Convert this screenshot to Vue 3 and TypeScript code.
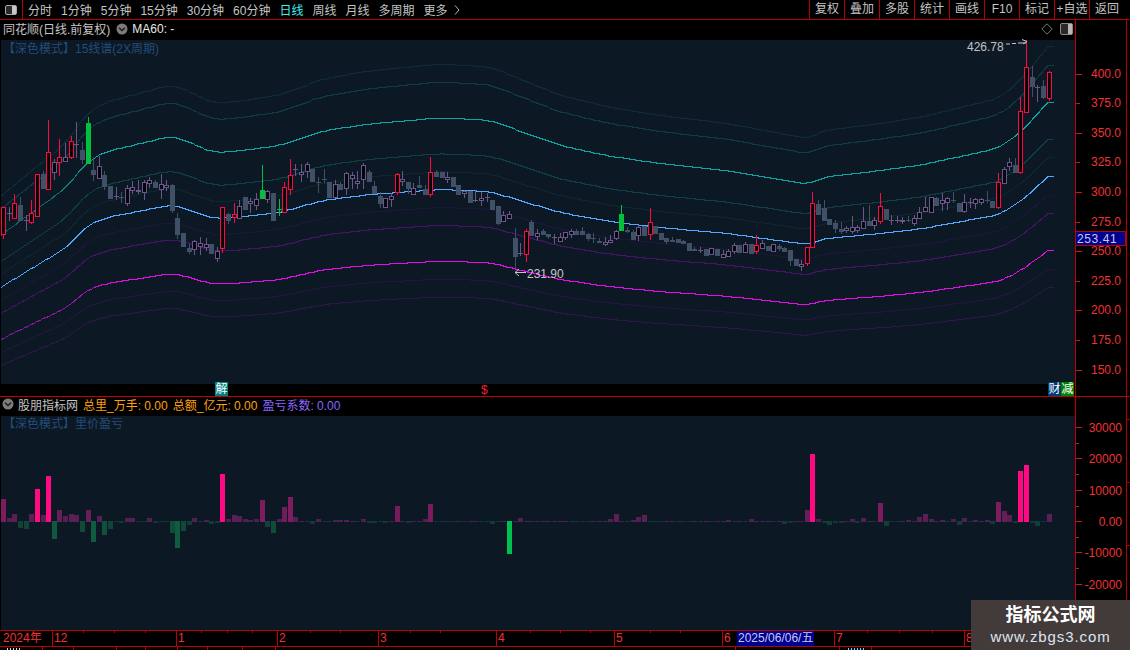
<script setup lang="ts">
type Candle = [string, number, number, number?, number?];

const tabs = ['分时', '1分钟', '5分钟', '15分钟', '30分钟', '60分钟', '日线', '周线', '月线', '多周期', '更多'];
const tools = ['复权', '叠加', '多股', '统计', '画线', 'F10', '标记', '+自选', '返回'];

const raw: Candle[] = [
  ['r',207,234,207,238],['p',213,213,207,220],['r',203,218,194,218],['g',205,220,197,220],['p',220,220,215,230],['r',213,222,200,223],['r',174,216],['g',174,188,171,188],['r',152,189,120,189],['p',162,172,159,179],
  ['r',157,162,139,175],['p',157,161,143,161],['r',141,157,136,158],['p',144,144,122,157],['g',150,159,142,163],['n',123,163,117,163],['g',170,174,157,180],['p',166,178,156,178],['g',175,186,171,189],['g',186,198],
  ['p',196,196,187,199],['g',197,197,192,202],['p',188,203,185,205],['p',187,190,181,193],['p',190,191,180,193],['p',182,192,180,199],['p',180,183,177,187],['g',182,187,180,187],['p',184,189,174,198],['p',185,187,180,190],
  ['g',185,210,184,212],['g',218,234,213,238],['g',233,246],['g',248,251,244,253],['p',241,249,240,254],['p',243,246,237,254],['p',244,247,238,250],['g',244,253],['p',251,258,247,261],['r',207,248,207,252],
  ['g',214,220,213,223],['r',214,217,203,222],['p',206,218,200,218],['g',197,209],['p',201,203,198,212],['p',199,205,193,209],['n',190,198,165,198],['p',191,199,190,202],['g',193,220],['n',209,209,199,215],
  ['r',187,212,182,212],['r',175,189,159,194],['p',169,169,164,175],['p',172,174,164,181],['p',164,171,162,177],['g',169,181],['g',182,182,177,192],['g',179,179,169,182],['g',182,197],['p',184,197,180,197],
  ['g',184,189,182,189],['p',173,188,172,194],['p',175,178,172,188],['p',181,183,171,188],['p',165,179,163,188],['g',172,181,170,181],['g',186,193,181,193],['g',196,203,192,207],['p',198,207],['p',196,199,193,206],
  ['r',174,192,173,194],['p',179,181,171,185],['g',182,188,182,193],['p',188,194,183,194],['g',185,187,176,187],['g',189,194,185,194],['r',172,194,157,196],['g',172,176,170,176],['g',172,177],['p',177,179,172,182],
  ['g',177,186],['g',185,194],['p',191,193,190,197],['g',191,202],['p',200,200,190,201],['p',198,200,192,205],['p',197,197,193,201],['g',200,209],['g',206,223,206,224],['p',215,221,211,221],
  ['p',214,218,211,218],['g',238,256,228,268],['p',253,253,243,255],['r',231,254,229,261],['g',222,235,220,235],['p',233,236,229,239],['g',231,234,229,234],['g',234,236,234,238],['p',237,237,234,243],['p',237,241,233,241],
  ['p',232,237,232,239],['p',231,234,229,237],['g',231,234,229,234],['g',231,234,227,234],['g',234,238,233,240],['g',238,238,233,242],['g',241,242,238,242],['p',242,244,237,245],['p',240,242,235,242],['p',231,238,230,239],
  ['n',214,230,205,230],['g',230,231,227,232],['g',232,239,230,239],['p',227,235,225,240],['g',226,235],['r',222,234,208,239],['g',226,233],['g',233,239],['g',238,241,238,243],['g',240,241,237,241],
  ['g',239,242],['g',241,243,240,243],['g',243,250],['g',249,250,247,250],['p',250,250,247,252],['g',249,255],['p',248,254],['g',249,255],['p',254,257,250,257],['p',251,256,249,256],
  ['p',245,251,243,253],['g',245,252],['p',244,252,242,252],['g',244,253],['r',245,251,235,253],['p',243,248,240,248],['g',246,250],['p',244,251],['g',246,248,244,250],['g',248,251,247,251],
  ['g',250,260,250,265],['g',259,265],['p',264,266,260,270],['r',247,263,247,265],['r',203,247,192,247],['g',204,214,200,214],['g',208,220,200,220],['g',219,224],['g',223,228,220,232],['g',229,231,222,233],
  ['p',228,230,226,232],['p',227,231,216,233],['p',227,230,225,232],['p',221,228,207,228],['g',221,225,205,225],['p',220,225,217,229],['r',206,221,193,223],['g',209,219],['p',220,220,215,224],['p',220,220,216,222],
  ['p',220,221,217,223],['g',220,220,216,221],['p',218,223,215,225],['p',212,218,207,218],['p',207,211,197,211],['p',197,212,197,212],['g',198,205,197,205],['p',200,203,193,210],['p',198,202,197,209],['g',200,200,192,202],
  ['g',203,211],['p',202,211,194,212],['p',202,202,198,207],['p',199,203,198,208],['p',199,202,198,204],['g',200,200,191,202],['g',201,207],['r',182,207,173,208],['p',169,183,167,183],['p',162,166,158,170],
  ['g',165,172,158,172],['r',111,172,97,173],['r',67,112,40,112],['g',77,86,66,96],['p',87,87,85,101],['g',86,97,80,98],['r',72,98,71,100]
];

const vols: number[] = [
  23,4,8,-7,-8,8,33,7,46,-18,12,6,8,7,-11,12,-21,6,-14,-8,-1,-2,4,4,-1,-1,4,-2,-1,-1,-12,-27,-10,-4,4,-1,2,-3,-2,48,
  3,7,6,3,2,3,22,-6,-12,3,15,25,5,1,-1,-3,3,-1,-1,2,2,2,1,-1,3,-2,-2,-1,-2,1,16,1,-2,1,1,3,18,-1,-1,-1,
  -1,1,-1,1,1,-1,-1,-3,-1,1,-33,1,4,1,1,1,1,1,1,1,1,-1,-1,-1,-1,1,1,1,3,8,1,-1,2,5,7,-1,-1,-1,1,1,
  -1,-1,-1,1,-1,1,-1,1,1,2,-1,1,-1,3,1,1,1,-1,1,-3,-2,1,1,12,68,3,-2,-4,-2,-2,1,3,-2,4,1,-1,19,-5,-1,-1,
  1,2,1,5,8,3,1,2,-1,3,-4,4,-1,2,1,2,-3,20,11,7,-2,51,57,-2,-5,-1,8
];

const centers = (i: number) => Math.round(3.2 + 5.62 * i);

const candleColor: Record<string, string> = { r: '#ff0a40', p: '#6a5688', g: '#3f5067', n: '#00c03c' };

const candles = raw.map(([t, top, bot, wt, wb], i) => {
  const x = centers(i);
  const color = candleColor[t];
  const hollow = t === 'r' || t === 'p';
  return {
    key: i,
    wick: `M${x + 0.5} ${wt ?? top}V${(wb ?? bot) + 1}`,
    cross: top === bot,
    hollow,
    color,
    x: x - 2,
    y: top,
    h: Math.max(bot - top, 1)
  };
});

const mix = (a: number[], b: number[], r: number) =>
  `rgb(${a.map((v, k) => Math.round(v + (b[k] - v) * r)).join(',')})`;

const bars = vols.map((v, i) => {
  const m = Math.abs(v);
  const r = Math.min(1, m / 20);
  const fill = v >= 30
    ? '#ff0a82'
    : v <= -30
      ? '#00c050'
      : v > 0
        ? mix([70, 32, 78], [126, 28, 96], r)
        : mix([18, 52, 52], [16, 92, 64], r);
  return { key: i, x: centers(i) - 2, y: v > 0 ? 522 - m : 521, w: 5, h: m, fill };
});

const keyPts: [number, number][] = [
  [1,287],[12,280],[40,263],[67,247],[87,225],[107,217],[143,210],[167,205],[177,205],[213,218],[233,217],[253,215],[280,212],[323,200],[370,194],[440,189],[490,191],[513,198],[560,212],[610,221],[660,227],[727,233],[800,243],[806,244],[827,238],[880,233],[923,228],[1000,214],[1022,200],[1048,176],[1055,176]
];

const yAt = (x: number) => {
  for (let i = 1; i < keyPts.length; i++) {
    if (x <= keyPts[i][0]) {
      const [x0, y0] = keyPts[i - 1];
      const [x1, y1] = keyPts[i];
      return y0 + ((y1 - y0) * (x - x0)) / (x1 - x0);
    }
  }
  return 176;
};

// Light moving average so the bands bend softly, except near the sharp right end.
const smoothY = (x: number) => {
  if (x < 20 || x > 1030) return yAt(x);
  const r = x > 780 && x < 830 ? 4 : 10;
  let sum = 0;
  for (let d = -r; d <= r; d += 2) sum += yAt(x + d);
  return sum / (r + 1);
};

const toPrice = (y: number) => 300 + (192 - y) / 1.184;
const toY = (p: number) => 192 - (p - 300) * 1.184;

const bandDefs: [number, string][] = [
  [1.35, '#0f2c36'], [1.3, '#0f3c42'], [1.2, 'url(#tealFade)'], [1.1, '#0f4044'], [1.05, '#0f262f'],
  [0.95, '#1e1638'], [0.9, '#4a1266'], [0.8, 'url(#magentaFade)'], [0.75, '#22163f'], [0.7, '#2f1648'], [1, '#55a8ff']
];

const bands = bandDefs.map(([k, color]) => {
  const pts: string[] = [];
  for (let x = 1; x <= 1055; x += 3) {
    const y = toY(toPrice(smoothY(x)) * k);
    pts.push(`${x},${Math.round(y) + 0.5}`);
  }
  return { k, color, pts: pts.join(' ') };
});

const mainTicks = [400, 375, 350, 325, 300, 275, 250, 225, 200, 175, 150].map((v) => ({
  v,
  y: Math.round(toY(v)),
  long: v % 50 === 0
}));

const subTicks = [
  { t: '30000', y: 427 }, { t: '20000', y: 458 }, { t: '10000', y: 490 },
  { t: '0.00', y: 521 }, { t: '-10000', y: 552 }, { t: '-20000', y: 584 }
];
const subMinor = [443, 474, 506, 537, 568, 600, 615];
const edgeTicks = [419, 482, 545, 608];

const months = [
  { t: '2024年', x: 3, sep: 0 }, { t: '12', x: 54, sep: 52 }, { t: '1', x: 178, sep: 176 }, { t: '2', x: 279, sep: 277 },
  { t: '3', x: 380, sep: 378 }, { t: '4', x: 498, sep: 496 }, { t: '5', x: 616, sep: 614 }, { t: '6', x: 724, sep: 722 },
  { t: '7', x: 836, sep: 834 }, { t: '8', x: 966, sep: 964 }
];
const timeTicks = [83, 114, 145, 201, 227, 252, 310, 340, 410, 440, 530, 560, 590, 650, 680, 867, 899, 932];
const lowSeps = [42, 73, 116, 145, 177, 207, 242, 275, 735, 839, 871];
</script>

<template>
  <div class="app">
    <header class="toolbar">
      <div class="layout-btn">
        <svg width="14" height="12" viewBox="0 0 14 12">
          <rect x="1.5" y="1.5" width="11" height="9" rx="1.5" fill="#2a2a2a" stroke="#a8a8a8" />
          <rect x="8" y="2" width="4" height="8" fill="#c8c8c8" />
        </svg>
      </div>
      <nav class="tabs">
        <span v-for="t in tabs" :key="t" class="tab" :class="{ active: t === '日线' }">{{ t }}</span>
        <svg class="more" width="6" height="12" viewBox="0 0 6 12"><path d="M1 1.5 5 6 1 10.5" fill="none" stroke="#b8b8b8" /></svg>
      </nav>
      <div class="tools">
        <span v-for="t in tools" :key="t" class="tool">{{ t }}</span>
      </div>
    </header>

    <section class="panel main-panel">
      <div class="plot-col">
        <div class="title-row">
          <span class="gray">同花顺(日线.前复权)</span>
          <svg class="circle" width="12" height="12" viewBox="0 0 12 12">
            <circle cx="6" cy="6" r="5.5" fill="#7c7c7c" />
            <path d="M3 4.8 6 7.6 9 4.8" fill="none" stroke="#1c1c1c" stroke-width="1.4" />
          </svg>
          <span class="white">MA60: -</span>
          <span class="spacer"></span>
          <svg class="diamond" width="12" height="12" viewBox="0 0 12 12"><path d="M6 .8 11.2 6 6 11.2 .8 6Z" fill="none" stroke="#777" /></svg>
          <svg class="split" width="13" height="12" viewBox="0 0 13 12">
            <rect x=".5" y=".5" width="12" height="11" rx="1.5" fill="#2a2a2a" stroke="#8a8a8a" />
            <rect x="8" y="1" width="4" height="10" fill="#b8b8b8" />
          </svg>
        </div>
        <svg class="plot" width="1075" height="344" viewBox="0 40 1075 344">
          <defs>
            <linearGradient id="tealFade" gradientUnits="userSpaceOnUse" x1="0" y1="0" x2="95" y2="0">
              <stop offset="0" stop-color="#125a60" />
              <stop offset="0.75" stop-color="#127a7e" />
              <stop offset="1" stop-color="#0fa3a3" />
            </linearGradient>
            <linearGradient id="magentaFade" gradientUnits="userSpaceOnUse" x1="0" y1="0" x2="120" y2="0">
              <stop offset="0" stop-color="#7a1a8a" />
              <stop offset="0.7" stop-color="#a014ac" />
              <stop offset="1" stop-color="#e80ae8" />
            </linearGradient>
          </defs>
          <rect x="1" y="40" width="1074" height="344" fill="#0c1824" />
          <polyline v-for="b in bands" :key="b.k" :points="b.pts" fill="none" :stroke="b.color" stroke-width="1" shape-rendering="crispEdges" />
          <g shape-rendering="crispEdges">
            <g v-for="c in candles" :key="c.key">
              <path :d="c.wick" :stroke="c.color" fill="none" />
              <path v-if="c.cross" :d="`M${c.x} ${c.y + 0.5}h5`" :stroke="c.color" fill="none" />
              <rect v-else-if="c.hollow" :x="c.x + 0.5" :y="c.y + 0.5" width="4" :height="c.h" fill="#05060c" :stroke="c.color" />
              <rect v-else :x="c.x" :y="c.y" width="5" :height="c.h + 1" :fill="c.color" />
            </g>
          </g>
          <text x="3" y="53" class="watermark-title">【深色模式】15线谱(2X周期)</text>
          <text x="967" y="51" class="note">426.78</text>
          <path d="M1006 44h4m2 -.5h4m2 -.5h8M1022 39.5l5 2-4 2.5" fill="none" stroke="#c4c4c4" />
          <text x="527" y="278" class="note">231.90</text>
          <path d="M526 272.5H515M519 269l-4 3.5 4 3.5" fill="none" stroke="#c4c4c4" />
        </svg>
        <div class="events">
          <span class="evt evt-teal evt-jie">解</span>
          <span class="evt-dollar">$</span>
          <span class="evt evt-blue">财</span>
          <span class="evt evt-green">减</span>
        </div>
      </div>
      <svg class="axis" width="54" height="376" viewBox="1076 20 54 376">
        <path d="M1126.5 20V396" stroke="#b80000" shape-rendering="crispEdges" />
        <g v-for="t in mainTicks" :key="t.v">
          <path :d="`M1076 ${t.y + 0.5}h${t.long ? 6 : 4}`" stroke="#d01818" shape-rendering="crispEdges" />
          <text x="1091" :y="t.y + 4" class="axis-num">{{ t.v.toFixed(1) }}</text>
        </g>
        <rect x="1075.5" y="231.5" width="50" height="14" fill="#000090" stroke="#c00000" shape-rendering="crispEdges" />
        <text x="1077" y="243" class="axis-price">253.41</text>
      </svg>
    </section>

    <section class="panel sub-panel">
      <div class="plot-col">
        <div class="title-row sub-title">
          <svg class="circle-sub" width="12" height="12" viewBox="0 0 12 12">
            <circle cx="6" cy="6" r="5.5" fill="#7c7c7c" />
            <path d="M3 4.8 6 7.6 9 4.8" fill="none" stroke="#1c1c1c" stroke-width="1.4" />
          </svg>
          <span class="gray">股朋指标网</span>
          <span class="orange">总里_万手: 0.00</span>
          <span class="orange">总额_亿元: 0.00</span>
          <span class="violet">盈亏系数: 0.00</span>
        </div>
        <svg class="plot" width="1075" height="214" viewBox="0 416 1075 214">
          <rect x="1" y="416" width="1074" height="214" fill="#0c1824" />
          <text x="3" y="428" class="watermark-title">【深色模式】里价盈亏</text>
          <g shape-rendering="crispEdges">
            <rect v-for="b in bars" :key="b.key" :x="b.x" :y="b.y" :width="b.w" :height="b.h" :fill="b.fill" />
          </g>
        </svg>
      </div>
      <svg class="axis" width="54" height="233" viewBox="1076 397 54 233">
        <path d="M1126.5 397V630" stroke="#b80000" shape-rendering="crispEdges" />
        <path v-for="y in edgeTicks" :key="'e' + y" :d="`M1127 ${y + 0.5}h3`" stroke="#b80000" shape-rendering="crispEdges" />
        <g v-for="t in subTicks" :key="t.t">
          <path :d="`M1076 ${t.y + 0.5}h6`" stroke="#d01818" shape-rendering="crispEdges" />
          <text x="1122" :y="t.y + 5" text-anchor="end" class="axis-num">{{ t.t }}</text>
        </g>
        <path v-for="y in subMinor" :key="y" :d="`M1076 ${y + 0.5}h3`" stroke="#d01818" shape-rendering="crispEdges" />
      </svg>
    </section>

    <footer class="timebar">
      <span v-for="m in months" :key="m.t" class="sep" :style="{ left: m.sep + 'px' }"></span>
      <span v-for="m in months" :key="'l' + m.t" class="month" :style="{ left: m.x + 'px' }">{{ m.t }}</span>
      <span v-for="t in timeTicks" :key="t" class="tick" :style="{ left: t + 'px' }"></span>
      <span class="date">2025/06/06/五</span>
    </footer>
    <div class="lowrow">
      <span v-for="s in lowSeps" :key="s" class="low-sep" :style="{ left: s + 'px' }"></span>
      <span class="frag frag-white"></span>
      <span class="frag frag-cyan"></span>
    </div>

    <aside class="brand">
      <div class="brand-name">指标公式网</div>
      <div class="brand-url">www.zbgs3.com</div>
    </aside>
  </div>
</template>

<style>
html, body { margin: 0; background: #000; }
</style>

<style scoped>
.app {
  position: relative;
  width: 1130px;
  height: 650px;
  overflow: hidden;
  background: #000;
  font: 12px "Liberation Sans", "Noto Sans CJK SC", sans-serif;
  color: #c4c4c4;
}
.toolbar {
  display: flex;
  height: 19px;
  border-bottom: 1px solid #b80000;
  align-items: stretch;
}
.layout-btn {
  width: 22px;
  border-right: 1px solid #b80000;
  display: flex;
  align-items: center;
  justify-content: center;
}
.tabs {
  display: flex;
  align-items: center;
  gap: 9px;
  padding-left: 5px;
  flex: 1;
}
.tab { white-space: nowrap; }
.tab.active { color: #40f0f0; }
.more { margin-left: -3px; }
.tools { display: flex; }
.tool {
  width: 34px;
  border-left: 1px solid #b80000;
  text-align: center;
  line-height: 19px;
  white-space: nowrap;
}
.tool:last-child { width: 34px; padding-right: 6px; }
.panel { display: flex; }
.main-panel { height: 376px; border-bottom: 1px solid #c00000; }
.sub-panel { height: 233px; }
.plot-col { width: 1075px; display: flex; flex-direction: column; }
.plot { display: block; flex: none; overflow: visible; }
.axis { display: block; flex: none; border-left: 1px solid #c00000; }
.title-row {
  display: flex;
  align-items: center;
  height: 20px;
  padding: 0 0 3px 3px;
  box-sizing: border-box;
  white-space: nowrap;
}
.sub-title { height: 19px; padding: 0 0 5px 2px; }
.gray { color: #c4c4c4; }
.white { color: #e8e8e8; margin-left: 4px; }
.circle { margin-left: 6px; }
.circle-sub { margin-right: 4px; }
.spacer { flex: 1; }
.diamond { margin-right: 7px; }
.split { margin-right: 2px; }
.orange { color: #ffa010; margin-left: 5px; }
.violet { color: #8a66ff; margin-left: 5px; }
.events { position: relative; height: 12px; }
.evt {
  position: absolute;
  top: -2px;
  height: 14px;
  width: 13px;
  line-height: 14px;
  text-align: center;
  color: #fff;
}
.evt-jie { left: 215px; }
.evt-teal { background: #008080; }
.evt-blue { left: 1048px; background: #003a70; }
.evt-green { left: 1061px; background: #008000; }
.evt-dollar {
  position: absolute;
  left: 481px;
  top: -1px;
  line-height: 14px;
  color: #f02030;
}
.watermark-title { fill: #234c7a; font-size: 12px; }
.note { fill: #c4c4c4; font-size: 12px; }
.axis-num { fill: #f03232; font-size: 12px; }
.axis-price { fill: #c8c8e8; font-size: 12px; letter-spacing: 0.6px; }
.timebar {
  position: relative;
  height: 15px;
  border-top: 1px solid #c00000;
  border-bottom: 1px solid #c00000;
  color: #f03232;
  line-height: 15px;
}
.sep { position: absolute; top: 0; width: 1px; height: 15px; background: #c00000; }
.sep:first-child { display: none; }
.month { position: absolute; top: 0; }
.tick { position: absolute; top: 0; width: 1px; height: 2px; background: #c00000; }
.date {
  position: absolute;
  left: 737px;
  top: 0;
  width: 77px;
  height: 15px;
  background: #000090;
  color: #c8c8e8;
  white-space: nowrap;
  padding-left: 1px;
  box-sizing: border-box;
}
.lowrow { position: relative; height: 3px; overflow: hidden; }
.low-sep { position: absolute; top: 0; width: 1px; height: 4px; background: #c00000; }
.frag {
  position: absolute;
  top: 1px;
  height: 2px;
  background: repeating-linear-gradient(90deg, var(--frag) 0 1px, transparent 1px 3px);
}
.frag-white { --frag: #ddd; left: 7px; width: 13px; }
.frag-cyan { --frag: #40f0f0; left: 848px; width: 17px; }
.brand {
  position: absolute;
  left: 971px;
  top: 600px;
  width: 159px;
  height: 50px;
  background: #433a3a;
  text-align: center;
}
.brand-name {
  color: #fff;
  font-size: 18px;
  font-weight: 700;
  line-height: 20px;
  margin-top: 5px;
}
.brand-url {
  color: #dde6f0;
  font-size: 15px;
  line-height: 20px;
  margin-top: 2px;
  letter-spacing: 0.9px;
}
</style>
